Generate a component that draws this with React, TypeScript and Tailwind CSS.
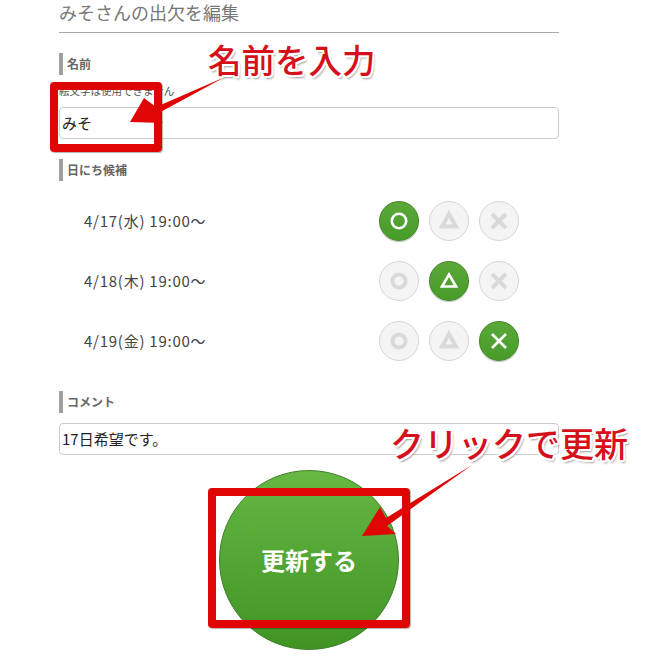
import React from 'react';

const rows = [
  { date: '4/17(水) 19:00～', active: 0 },
  { date: '4/18(木) 19:00～', active: 1 },
  { date: '4/19(金) 19:00～', active: 2 },
];

const Mark: React.FC<{ kind: number; on: boolean }> = ({ kind, on }) => {
  const color = on ? '#ffffff' : '#d9d9d9';
  const width = on ? 2.6 : 4;
  return (
    <svg width="24" height="24" viewBox="0 0 24 24" fill="none" stroke={color} strokeWidth={width}>
      {kind === 0 && <circle cx="12" cy="12" r={on ? 7.2 : 6.6} />}
      {kind === 1 && (on ? <path d="M12 5.5 L19 17.5 H5 Z" /> : <path d="M12 5 L19 17.5 H5 Z" />)}
      {kind === 2 && <path d="M5 5 L19 19 M19 5 L5 19" />}
    </svg>
  );
};

const Choice: React.FC<{ kind: number; on: boolean }> = ({ kind, on }) => (
  <div
    className={
      on
        ? 'flex h-10 w-10 items-center justify-center rounded-full border border-[#47822c] bg-gradient-to-b from-[#5aa838] to-[#479c28] shadow-[0_1px_1px_rgba(0,0,0,0.25)]'
        : 'flex h-10 w-10 items-center justify-center rounded-full border border-[#d6d6d6] bg-[#f4f4f4]'
    }
  >
    <Mark kind={kind} on={on} />
  </div>
);

const Label: React.FC<{ text: string }> = ({ text }) => (
  <div className="flex h-[22px] items-center border-l-4 border-[#a0a0a0] pl-1 text-xs font-bold text-[#666]">{text}</div>
);

const TextBox: React.FC<{ value: string }> = ({ value }) => (
  <div className="flex h-8 items-center rounded border border-[#ccc] bg-white px-[2px] text-[15px] text-[#222]">{value}</div>
);

const outline =
  '[text-shadow:2px_0_0_#fff,-2px_0_0_#fff,0_2px_0_#fff,0_-2px_0_#fff,1.5px_1.5px_0_#fff,-1.5px_-1.5px_0_#fff,1.5px_-1.5px_0_#fff,-1.5px_1.5px_0_#fff,2px_3px_2px_#999]';

const App: React.FC = () => {
  return (
    <div className="relative h-[672px] w-[662px] overflow-hidden bg-white font-['Noto_Sans_CJK_JP','Liberation_Sans',sans-serif]">
      <div className="ml-[59px] w-[500px]">
        <h1 className="h-[33px] border-b border-[#aaa] text-[18px] leading-[25px] text-[#777]">みそさんの出欠を編集</h1>

        <div className="mt-5">
          <Label text="名前" />
        </div>
        <p className="mt-2 h-6 text-[10.5px] leading-[16px] text-[#555]">絵文字は使用できません</p>
        <TextBox value="みそ" />

        <div className="mt-5">
          <Label text="日にち候補" />
        </div>
        <div className="mt-2.5">
          {rows.map((row) => (
            <div key={row.date} className="flex h-[60px] items-center">
              <div className="w-[320px] pl-[25px] text-[15px] tracking-[0.75px] text-[#444]">{row.date}</div>
              <div className="flex gap-2.5">
                {[0, 1, 2].map((kind) => (
                  <Choice key={kind} kind={kind} on={kind === row.active} />
                ))}
              </div>
            </div>
          ))}
        </div>

        <div className="mt-5">
          <Label text="コメント" />
        </div>
        <div className="mt-2.5">
          <TextBox value="17日希望です。" />
        </div>

        <div className="mt-[15px] flex justify-center">
          <div className="flex h-[180px] w-[180px] items-center justify-center rounded-full border border-[#3f7f28] bg-gradient-to-b from-[#66b843] to-[#3f9424] text-2xl font-bold text-white">
            更新する
          </div>
        </div>
      </div>

      {/* annotations */}
      <div className="absolute left-[50px] top-[82px] h-[70px] w-[112px] rounded-sm border-8 border-[#e00505] shadow-[1px_1px_1px_rgba(0,0,0,0.3)]" />
      <div className="absolute left-[208px] top-[488px] h-[140px] w-[202px] rounded-sm border-8 border-[#e00505] shadow-[1px_1px_1px_rgba(0,0,0,0.3)]" />
      <svg className="absolute left-0 top-0" width="662" height="672" viewBox="0 0 662 672">
        <path d="M225 77 L156 107 L144 98 L130 122 L163 123 L155 115 Z" fill="#e00505" />
        <path d="M472 465 L386 518 L380 507 L362 536 L396 534 L387 526 Z" fill="#e00505" />
      </svg>
      <div className={`absolute left-[208px] top-[36px] whitespace-nowrap text-[33.5px] font-medium leading-[46px] text-[#d5101a] ${outline}`}>
        名前を入力
      </div>
      <div className={`absolute left-[390px] top-[420px] whitespace-nowrap text-[34px] font-medium leading-[46px] text-[#d5101a] ${outline}`}>
        クリックで更新
      </div>
    </div>
  );
};

export default App;
